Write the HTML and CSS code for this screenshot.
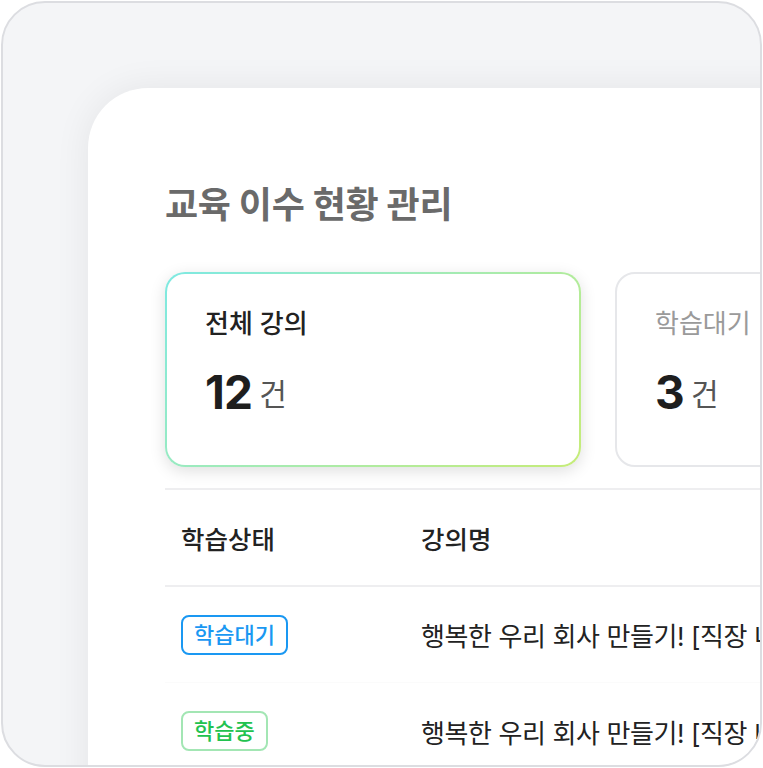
FILE: index.html
```html
<!DOCTYPE html>
<html lang="ko">
<head>
<meta charset="utf-8">
<title>교육 이수 현황 관리</title>
<link rel="stylesheet" href="styles.css">
</head>
<body>
<div class="frame">
  <div class="panel">
    <h1 class="title">교육 이수 현황 관리</h1>
    <div class="cards">
      <div class="card card-active">
        <div class="card-label">전체 강의</div>
        <div class="card-value"><span class="num">12</span><span class="unit">건</span></div>
      </div>
      <div class="card">
        <div class="card-label muted">학습대기</div>
        <div class="card-value"><span class="num">3</span><span class="unit">건</span></div>
      </div>
    </div>
    <div class="table">
      <div class="row head">
        <div class="col-status">학습상태</div>
        <div class="col-name">강의명</div>
      </div>
      <div class="row">
        <div class="col-status"><span class="badge badge-wait">학습대기</span></div>
        <div class="col-name">행복한 우리 회사 만들기! [직장 내 괴롭힘 예방 교육]</div>
      </div>
      <div class="row last">
        <div class="col-status"><span class="badge badge-ing">학습중</span></div>
        <div class="col-name">행복한 우리 회사 만들기! [직장 내 괴롭힘 예방 교육]</div>
      </div>
    </div>
  </div>
</div>
</body>
</html>
```
FILE: styles.css
```css
* { box-sizing: border-box; }
html, body { margin: 0; padding: 0; background: #ffffff; }
body {
  font-family: "Inter", "Noto Sans CJK KR", "Noto Sans", sans-serif;
  color: #222222;
}
.frame {
  margin: 1px;
  width: 761px;
  height: 766px;
  border: 2px solid #dcdde1;
  border-radius: 44px;
  background: #f4f5f7;
  overflow: hidden;
  padding: 85px 0 0 85px;
}
.panel {
  width: 1000px;
  height: 800px;
  background: #ffffff;
  border-radius: 60px 0 0 0;
  box-shadow: 0 0 36px rgba(0, 0, 0, 0.07);
  padding: 97px 0 0 77px;
}
.title {
  margin: 0;
  font-size: 36px;
  line-height: 40px;
  font-weight: 700;
  color: #6a6a6a;
  letter-spacing: -0.3px;
}
.cards {
  display: flex;
  gap: 34px;
  margin-top: 47px;
}
.card {
  width: 416px;
  height: 195px;
  border: 2px solid #e6e7ea;
  border-radius: 20px;
  padding: 35px 38px 0;
  background: #ffffff;
}
.card-active {
  border: 2px solid transparent;
  background:
    linear-gradient(#ffffff, #ffffff) padding-box,
    linear-gradient(135deg, #7ee9e2 0%, #a6ebb0 50%, #c6ec78 100%) border-box;
  box-shadow: 0 4px 16px rgba(0, 0, 0, 0.13);
}
.card-label {
  font-size: 26px;
  line-height: 30px;
  font-weight: 500;
  color: #222222;
}
.card-label.muted { color: #9a9a9a; font-weight: 400; }
.card-value {
  margin-top: 28px;
  line-height: 50px;
}
.num {
  font-size: 46px;
  font-weight: 700;
  letter-spacing: -0.8px;
  color: #1e1e1e;
}
.unit {
  margin-left: 7px;
  font-size: 30px;
  font-weight: 400;
  color: #555555;
  vertical-align: 4px;
}
.table {
  margin-top: 21px;
  border-top: 2px solid #eeeef0;
}
.row {
  display: flex;
  align-items: center;
  height: 96px;
  border-bottom: 1px solid #fbfbfb;
  font-size: 26px;
  letter-spacing: -0.4px;
  white-space: nowrap;
}
.row.head {
  height: 97px;
  border-bottom: 2px solid #eeeef0;
  font-size: 25.5px;
  letter-spacing: 0;
  font-weight: 500;
}
.row.last { border-bottom: none; }
.col-status { width: 256px; padding-left: 16px; }
.col-name { flex: 1; }
.badge {
  display: inline-block;
  height: 40px;
  line-height: 36px;
  padding: 0 11px;
  border-radius: 8px;
  font-size: 22px;
  font-weight: 500;
  letter-spacing: 0;
}
.badge-wait { border: 2px solid #1a98f2; color: #1a98f2; }
.badge-ing { border: 2px solid #a3e6b4; color: #22c24f; }
```
